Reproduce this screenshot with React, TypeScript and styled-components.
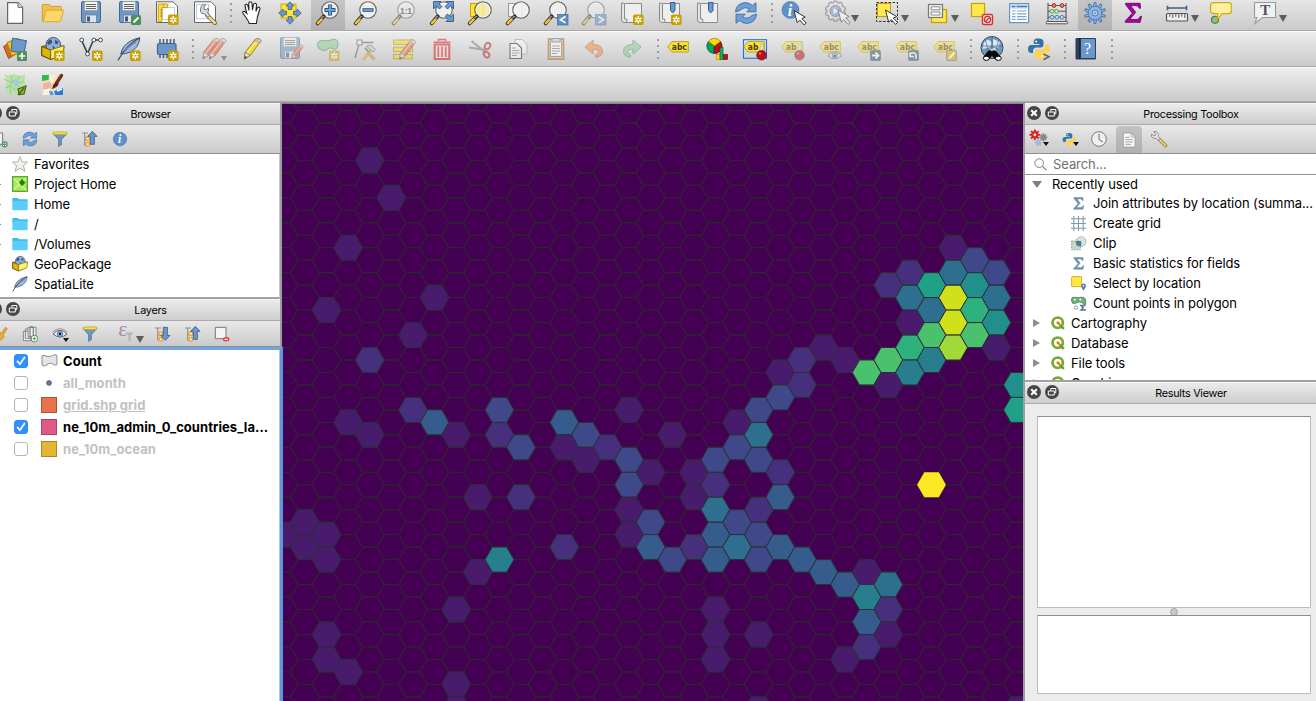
import React from 'react';
import styled, { createGlobalStyle, css } from 'styled-components';

const GlobalStyle = createGlobalStyle`
  * { box-sizing: border-box; }
  html, body { margin: 0; padding: 0; }
  body { width: 1316px; height: 701px; overflow: hidden; background: #ececec; }
  svg { display: block; flex: none; }
`;

/* ---------- layout ---------- */

const Window = styled.div`
  display: flex;
  flex-direction: column;
  width: 1316px;
  height: 701px;
  overflow: hidden;
  color: #000;
  font-family: Inter, 'Liberation Sans', sans-serif;
  font-size: 13px;
  letter-spacing: -0.08px;
`;

const ToolbarRow = styled.div<{ $height: number; $top: number; $last?: boolean }>`
  display: flex;
  flex: none;
  height: ${p => p.$height}px;
  border-bottom: 1px solid ${p => (p.$last ? '#9a9a9a' : '#fafafa')};
  box-shadow: inset 0 -1px 0 #a9a9a9;
  background: linear-gradient(${p => (p.$top === 1 ? '#e6e6e6' : '#ededed')}, #c9c9c9);
  --icon-top: ${p => p.$top}px;
`;

const Tool = styled.div<{ $wide?: boolean; $active?: boolean; $dim?: boolean }>`
  display: flex;
  position: relative;
  flex: none;
  align-items: flex-start;
  justify-content: center;
  width: ${p => (p.$wide ? 50 : 38)}px;
  padding-top: var(--icon-top);
  &:first-child { margin-left: -4px; }
  ${p => p.$active && css`
    width: 34px;
    margin: 0 2px 1px;
    background: linear-gradient(#c6c6c6, #b2b2b2);
  `}
  ${p => p.$dim && css` & > svg { opacity: 0.5; } `}
`;

const Caret = styled.i<{ $x: number; $y: number; $dark?: boolean; $small?: boolean }>`
  position: absolute;
  left: ${p => p.$x}px;
  top: ${p => p.$y}px;
  border: ${p => (p.$dark ? 3 : p.$small ? 3.5 : 4)}px solid transparent;
  border-top: ${p => (p.$dark ? 4.5 : p.$small ? 5 : 7.5)}px solid ${p => (p.$dark ? '#111' : p.$small ? '#8c8c8c' : '#5c5c5c')};
  border-bottom: 0;
`;

const Grip = styled.div`
  flex: none;
  width: 9px;
  padding: calc(var(--icon-top) + 2px) 0 0 6px;
  &::before {
    content: '';
    display: block;
    width: 2px;
    height: 20px;
    background: repeating-linear-gradient(#9a9a9a 0 2px, transparent 2px 6px);
  }
`;

const Workspace = styled.main`
  display: grid;
  grid-template-columns: 282px 741px 293px;
  flex: 1;
  min-height: 0;
`;

const LeftDock = styled.aside`
  display: flex;
  flex-direction: column;
  border-right: 2px solid #9d9d9d;
  min-height: 0;
`;

const RightDock = styled.aside`
  display: flex;
  flex-direction: column;
  border-left: 2px solid #9d9d9d;
  min-height: 0;
  min-width: 0;
`;

const MapCanvas = styled.section`
  border-top: 1px solid #858585;
  background: #440154;
  overflow: hidden;
`;

const TitleBar = styled.header<{ $left: number }>`
  display: flex;
  position: relative;
  flex: none;
  justify-content: center;
  align-items: center;
  height: 22px;
  padding-left: ${p => p.$left}px;
  padding-top: 1px;
  border-top: 1px solid #f5f5f5;
  border-bottom: 1px solid #aaa;
  background: linear-gradient(#ebebeb, #cdcdcd);
  font-size: 10.8px;
  letter-spacing: -0.27px;
  white-space: nowrap;
`;

const TitleButtons = styled.div<{ $x: number }>`
  display: flex;
  position: absolute;
  left: ${p => p.$x}px;
  top: 2px;
  gap: 4px;
`;

const DockTools = styled.div<{ $height: number; $offset?: number }>`
  display: flex;
  flex: none;
  height: ${p => p.$height}px;
  overflow: hidden;
  border-bottom: 1px solid #8f8f8f;
  background: linear-gradient(#e9e9e9, #cacaca);
  & > :first-child { margin-left: ${p => p.$offset ?? 0}px; }
`;

const DockTool = styled.div<{ $w?: number; $active?: boolean }>`
  display: flex;
  position: relative;
  flex: none;
  align-items: center;
  justify-content: center;
  width: ${p => p.$w ?? 30}px;
  ${p => p.$active && css`
    width: 26px;
    margin: 1px 2px 0;
    border-radius: 4px 4px 0 0;
    background: linear-gradient(#c2c2c2, #b0b0b0);
  `}
`;

const BrowserTree = styled.div`
  flex: none;
  height: 145px;
  overflow: hidden;
  background: #fff;
  border-bottom: 2px solid #a2a2a2;
  border-right: 1px solid #c9c9c9;
`;

const BrowserRow = styled.div<{ $branch?: boolean }>`
  display: flex;
  align-items: center;
  height: 20px;
  padding-left: 11px;
  gap: 6px;
  white-space: nowrap;
  &::before {
    content: '';
    width: 1px;
    height: 1px;
    margin-left: -11px;
    margin-right: 5px;
    background: ${p => (p.$branch ? '#8a8a8a' : 'transparent')};
  }
`;

const LayerTree = styled.div`
  position: relative;
  z-index: 1;
  flex: 1;
  margin-right: -3px;
  background: #fff;
  border-top: 3px solid #71a5e0;
  border-right: 3px solid #5f95dc;
  box-shadow: inset -1px 0 0 #a9c7ea;
`;

const LayerRow = styled.div<{ $muted?: boolean; $underline?: boolean }>`
  display: flex;
  align-items: center;
  height: 22px;
  padding-left: 14px;
  font-weight: 700;
  letter-spacing: 0.06px;
  color: ${p => (p.$muted ? '#c1c1c1' : '#000')};
  white-space: nowrap;
  & > span { text-decoration: ${p => (p.$underline ? 'underline' : 'none')}; }
`;

const CheckBox = styled.div<{ $on?: boolean }>`
  display: flex;
  align-items: center;
  justify-content: center;
  width: 14px;
  height: 14px;
  margin-right: 13px;
  border: 1px solid ${p => (p.$on ? '#2a8cf9' : '#b5b5b5')};
  border-radius: 3px;
  background: ${p => (p.$on ? '#2f92fc' : '#fff')};
`;

const Swatch = styled.div<{ $fill: string; $edge: string }>`
  width: 16px;
  height: 16px;
  background: ${p => p.$fill};
  border: 1px solid ${p => p.$edge};
`;

const LayerSymbol = styled.div`
  display: flex;
  align-items: center;
  justify-content: center;
  width: 16px;
  height: 16px;
  margin-right: 6px;
`;

const SearchField = styled.div`
  display: flex;
  flex: none;
  align-items: center;
  height: 21px;
  padding-left: 9px;
  gap: 6px;
  background: #fff;
  border-bottom: 1px solid #8f8f8f;
  color: #6f6f6f;
`;

const Toolbox = styled.div`
  flex: none;
  height: 207px;
  overflow: hidden;
  background: #fff;
  border-bottom: 2px solid #a2a2a2;
`;

const ToolboxRow = styled.div<{ $depth: number }>`
  display: flex;
  align-items: center;
  height: 20px;
  padding-left: ${p => (p.$depth === 1 ? 46 : 7)}px;
  gap: ${p => (p.$depth === 1 ? 7 : 0)}px;
  white-space: nowrap;
  &:first-child { height: 18px; }
`;

const Twisty = styled.i<{ $open?: boolean }>`
  width: 0;
  height: 0;
  margin-right: ${p => (p.$open ? 10 : 11)}px;
  border-style: solid;
  ${p => p.$open
    ? css`border-width: 7px 5px 0; border-color: #808080 transparent;`
    : css`border-width: 4px 0 4px 7px; border-color: transparent #8e8e8e; margin-left: 1px;`}
`;

const ProviderIcon = styled.span`
  display: flex;
  width: 14px;
  margin-right: 6px;
`;

const Results = styled.div`
  display: flex;
  flex-direction: column;
  flex: 1;
  padding: 12px 5px 7px 12px;
  background: #ececec;
`;

const ResultBox = styled.div<{ $height: number }>`
  flex: none;
  height: ${p => p.$height}px;
  background: #fff;
  border: 1px solid #bcbcbc;
  border-top-color: #8e8e8e;
`;

const SplitHandle = styled.div`
  display: flex;
  flex: none;
  align-items: center;
  justify-content: center;
  height: 7px;
  &::before {
    content: '';
    width: 6px;
    height: 6px;
    border-radius: 50%;
    background: #c9c9c9;
    border: 1px solid #a8a8a8;
  }
`;

/* ---------- icons ---------- */

type P = { size?: number };
const Svg = ({ size = 24, children }: { size?: number; children: React.ReactNode }) => (
  <svg width={size} height={size} viewBox="0 0 24 24" fill="none" overflow="visible">{children}</svg>
);

const Star = () => (
  <g>
    <rect x="13" y="13.5" width="10.6" height="10.4" rx="1.6" fill="#c8a100" />
    <path d="M18.3 15v7.4M15.1 16.8l6.4 3.8M21.5 16.8l-6.4 3.8" stroke="#fff" strokeWidth="1.5" />
    <circle cx="18.3" cy="18.7" r="1" fill="#c8a100" />
  </g>
);
const GreenPlus = () => (
  <g>
    <rect x="14" y="14" width="10" height="10" rx="1.6" fill="#4f8f5b" />
    <path d="M19 15.8v6.4M15.8 19h6.4" stroke="#fff" strokeWidth="1.7" />
  </g>
);
const Arrow = ({ x = 13, y = 8 }: { x?: number; y?: number }) => (
  <path transform={`translate(${x} ${y})`} d="M0 0l3.2 12.2 2.6-2.6 4.3 4.8 2-1.8-4.3-4.6 3.4-1.4z" fill="#fff" stroke="#333" strokeWidth="1" />
);
const Lens = ({ cx = 14, cy = 9, fill = '#f1f1f1' }: { cx?: number; cy?: number; fill?: string }) => (
  <g>
    <circle cx={cx} cy={cy} r="8.2" fill={fill} fillOpacity="0.85" stroke="#6b6b6b" strokeWidth="1.3" />
    <circle cx={cx} cy={cy} r="7" stroke="#fff" strokeOpacity=".7" strokeWidth="1" />
    <path d={`M${cx - 6.3} ${cy + 6.3}L1.6 22.4`} stroke="#3b3b3b" strokeWidth="3.8" strokeLinecap="round" />
    <path d="M5.6 18.4L1.9 22.1" stroke="#ffc52b" strokeWidth="2.3" strokeLinecap="round" />
    <path d={`M${cx - 6.4} ${cy + 6}l-2 2`} stroke="#ddd" strokeWidth="1" />
  </g>
);
const FloppyBase = () => (
  <g>
    <path d="M2.5 2.2Q2.5.5 4 .5h16.2q1.3 0 1.3 1.7v17.6q0 1.7-1.5 1.7H4q-1.5 0-1.5-1.7z" fill="#6d97c4" stroke="#41658f" />
    <path d="M5.5.5h13v9h-13z" fill="#f2f2f0" stroke="#8a9198" strokeWidth=".6" />
    <path d="M7 3.5h10M7 5.5h10M7 7.5h10" stroke="#555" strokeWidth=".9" />
    <path d="M6.5 14h11v7.5h-11z" fill="#dfe3e6" stroke="#4f6d8c" strokeWidth=".6" />
    <path d="M8 15.500h3v5H8z" fill="#3c5a7d" />
  </g>
);
const PencilShape = ({ color = '#f1d836', edge = '#9a8512' }: { color?: string; edge?: string }) => (
  <g>
    <path d="M5 15.5L15.5 2q2.8-2.2 5.6 1.6L10.5 18.2 4.4 22z" fill={color} stroke={edge} strokeWidth=".9" />
    <path d="M7 16.5L17.5 3" stroke="#fff" strokeOpacity=".55" strokeWidth="1.4" />
    <path d="M15.3 2.3q3-2.2 5.8 1.4l-1.6 2.2q-2.2-3-5.6-1.8z" fill="#d8d0c4" stroke="#88827a" strokeWidth=".7" />
    <path d="M5.2 15.3l5.1 2.8L4.4 22z" fill="#eee4cc" stroke="#666" strokeWidth=".7" />
    <path d="M4.9 18.9l2.4 1.2L4.4 22z" fill="#444" />
  </g>
);
const Label = ({ text = 'abc' }: { text?: string }) => (
  <g>
    <path d="M.8 9.8L5 4.6h16.3V15H5z" fill="#f8e13e" stroke="#c2a20e" />
    <text x="4.8" y="12.7" fontFamily="DejaVu Sans" fontWeight="700" fontSize="8.3" fill="#4a3c14" textLength={text === 'abc' ? 15 : 10.5} lengthAdjust="spacingAndGlyphs">{text}</text>
  </g>
);

const NewIcon = () => <Svg><path d="M4.6 1.6H15l4.6 4.700v16.100h-15z" fill="#fff" stroke="#666" strokeWidth="1.2" /><path d="M15 1.600v4.700h4.600" fill="#ddd" stroke="#666" /></Svg>;
const OpenIcon = () => <Svg><path d="M1.200 4.200q0-.8 1-.8h6l1.800 2h9.400q1 0 1 1v4H5.800L2.400 20.500q-1 0-1-1z" fill="#f0c24a" stroke="#cf9e2b" /><path d="M5.200 9.200h17.300L19.600 20q-.2.700-1 .700H2z" fill="#fcd667" stroke="#d9a935" /></Svg>;
const SaveIcon = () => <Svg><FloppyBase /></Svg>;
const SaveAsIcon = () => <Svg><FloppyBase /><rect x="14" y="14" width="10" height="10" rx="1.600" fill="#4f8f5b" /><path d="M16.500 21.500l5-5" stroke="#fff" strokeWidth="2" /></Svg>;
const LayoutNewIcon = () => <Svg><path d="M1.500.8H18l4.500 4.500V21.500h-21z" fill="#fff" stroke="#666" /><path d="M7.500 6.500h12v12h-12z" fill="#fff" stroke="#b9cde4" /><path d="M3.200 3h9.500v3.600H6.800v14H3.200z" fill="#f9dc4b" stroke="#c7a10d" /><path d="M5 9h2M5 12h2M5 15h2M8.500 3v2" stroke="#a88706" strokeWidth=".8" /><Star /></Svg>;
const LayoutManagerIcon = () => <Svg><path d="M1.500.8H18l4.500 4.500V21.500h-21z" fill="#fff" stroke="#666" /><path d="M3.600 3.300h12v14.500h-12z" stroke="#b3cbe8" fill="#fbfdff" /><path d="M14 14l8 8" stroke="#7b6a38" strokeWidth="4" strokeLinecap="round" /><path d="M15.500 15.500l6.300 6.300" stroke="#eee0a0" strokeWidth="2.400" strokeLinecap="round" /><path d="M8.200 5.200q1-1.600 3-1.500l1.500.5-2 2 .3 2.100 2.400.4 1.800-1.700q1 3.300-.8 4.600l2.400 3-2 2-3.200-3.800Q7 12.500 7.500 9z" fill="#dcdcdc" stroke="#666" strokeWidth=".9" /></Svg>;
const HandIcon = () => <Svg><path d="M9.300 22.500q-1-3-3.700-6.500L2.800 12q-.5-2 1.700-1.600l2.300 2.100L5 5q-.1-1.900 1.500-1.700 1.200.2 1.500 1.700l1 4.500-.2-6.800q.1-2 1.700-1.900 1.500.1 1.600 1.900l.3 6.500 1-5.600q.5-1.600 1.900-1.300 1.400.4 1.200 2l-.6 6 1.400-3.200q.7-1.400 1.900-.8 1 .5.6 2.200-1.700 5.200-2.400 7.500l-1 6.500z" fill="#fff" stroke="#222" strokeWidth="1.100" /></Svg>;
const PanIcon = () => <Svg><rect x="3" y="3" width="15" height="14" fill="#ffe23b" stroke="#d5a800" /><g fill="#6b99cc" stroke="#355f91" strokeWidth=".8"><path d="M12 .8l4 4.200h-2.200v3.500h-3.600V5H8z" /><path d="M12 23.200l4-4.200h-2.200v-3.500h-3.600V19H8z" /><path d="M.8 12L5 8v2.200h3.500v3.600H5V16z" /><path d="M23.200 12L19 8v2.200h-3.500v3.600H19V16z" /></g></Svg>;
const ZoomInIcon = () => <Svg><Lens /><path d="M14 3.500v11M8.500 9h11" stroke="#31547e" strokeWidth="3.800" /><path d="M14 4.300v9.400M9.300 9h9.400" stroke="#6c9fd8" strokeWidth="2.100" /></Svg>;
const ZoomOutIcon = () => <Svg><Lens /><path d="M8.500 9h11" stroke="#31547e" strokeWidth="3.600" /><path d="M9.300 9h9.400" stroke="#6c9fd8" strokeWidth="1.900" /></Svg>;
const ZoomNativeIcon = () => <Svg><Lens /><text x="8" y="12.600" fontFamily="Liberation Sans" fontWeight="700" fontSize="9.500" fill="#333" textLength="12" lengthAdjust="spacingAndGlyphs">1:1</text></Svg>;
const ZoomFullIcon = () => <Svg><Lens /><g fill="#6b99cc" stroke="#2f5788" strokeWidth=".9"><path d="M3.500.5h7.500L8.900 2.600l3 3-2.400 2.400-3-3L3.500 7.800z" /><path d="M23.500.5H16l2.100 2.100-3 3 2.400 2.400 3-3 3 2.800z" /><path d="M23.500 20.500H16l2.100-2.100-3-3 2.400-2.400 3 3 3-2.800z" /></g></Svg>;
const ZoomSelectionIcon = () => <Svg><rect x="2.500" y="2.500" width="13" height="13" fill="#ffe529" stroke="#c8a100" /><Lens cx={15} fill="#f6edb0" /></Svg>;
const ZoomLayerIcon = () => <Svg><rect x="2.500" y="2.500" width="13" height="13" fill="#f3f3f3" stroke="#999" /><Lens cx={15} /></Svg>;
const ZoomLastIcon = () => <Svg><Lens /><rect x="13.500" y="13.500" width="10.500" height="10.500" fill="#5e8fc6" stroke="#3d689b" strokeWidth=".7" /><path d="M21.500 15.500l-5 3.200 5 3.200" stroke="#fff" strokeWidth="1.700" /></Svg>;
const ZoomNextIcon = () => <Svg><Lens /><rect x="13.500" y="13.500" width="10.500" height="10.500" fill="#5e8fc6" stroke="#3d689b" strokeWidth=".7" /><path d="M16.500 15.500l5 3.200-5 3.200" stroke="#fff" strokeWidth="1.700" /></Svg>;
const MapSheet = () => <g><path d="M4.500 2.500h17v19h-17z" fill="#eee" stroke="#8b8b8b" /><path d="M1.500 2q2.500-.8 3 1.500v14.500h2.300v3.500H4q-2.500-.3-2.500-2.500z" fill="#e4e4e4" stroke="#8b8b8b" /></g>;
const NewMapIcon = () => <Svg><MapSheet /><Star /></Svg>;
const NewBookmarkIcon = () => <Svg><MapSheet /><path d="M12.500 1.500h4.500v8l-2.300 2.500-2.200-2.500z" fill="#6b99cc" stroke="#355f91" /><Star /></Svg>;
const BookmarksIcon = () => <Svg><MapSheet /><path d="M12.500 1.500h4.500v8l-2.300 2.500-2.200-2.500z" fill="#6b99cc" stroke="#355f91" /></Svg>;
const RefreshIcon = ({ size }: P) => <Svg size={size}><g fill="#6d9fd8" stroke="#3e6da6" strokeWidth=".9"><path d="M1.500 11Q2 2.500 11 1.600q4.500 0 7.300 2.800L22 1.800v9H12.800l2.800-3Q10 5.300 6.300 9.300z" /><path d="M22.500 13Q22 21.500 13 22.400q-4.500 0-7.300-2.800L2 22.200v-9h9.200l-2.800 3q5.600 2.500 9.300-1.500z" /></g></Svg>;
const IdentifyIcon = () => <Svg><circle cx="9.500" cy="9" r="8.500" fill="#5f90c7" stroke="#42709f" strokeWidth=".6" /><text x="6.800" y="14.500" fontFamily="Liberation Serif" fontStyle="italic" fontWeight="700" fontSize="16" fill="#fff">i</text><Arrow x={13} y={9.500} /></Svg>;
const GearPath = ({ fill, stroke, n = 10 }: { fill: string; stroke: string; n?: number }) => (
  <g>
    {Array.from({ length: n }, (_, i) => <rect key={i} x="10.300" y=".8" width="3.400" height="6" rx="1" fill={fill} stroke={stroke} strokeWidth=".9" transform={`rotate(${(i * 360) / n} 12 12)`} />)}
    <circle cx="12" cy="12" r="7.300" fill={fill} stroke={stroke} strokeWidth="0.9" />
  </g>
);
const ActionIcon = () => <Svg><g transform="translate(-1.500 -2)">{Array.from({ length: 10 }, (_, i) => <circle key={i} cx="12" cy="3.800" r="2" fill="#e4e4e4" stroke="#666" strokeWidth="1.300" transform={`rotate(${i * 36} 12 12)`} />)}<circle cx="12" cy="12" r="8" fill="#e4e4e4" /><circle cx="12" cy="12" r="5.600" fill="#6f9bcb" stroke="#446" strokeWidth=".8" /><path d="M10 9l5 3-5 3z" fill="#fff" /></g><Arrow x={13} y={9} /></Svg>;
const SelectIcon = () => <Svg><rect x="1.500" y="1.500" width="21" height="19" stroke="#333" strokeDasharray="2.500 1.500" /><rect x="2.500" y="2.500" width="13" height="13" fill="#ffe94d" stroke="#c8a100" /><Arrow x={10.500} y={9} /></Svg>;
const SelectFormIcon = () => <Svg><rect x="6.500" y="8.500" width="15" height="13" fill="#ffe94d" stroke="#c8a100" strokeWidth="1.300" /><rect x="3.500" y="3.500" width="14" height="13" fill="#f4f4f4" stroke="#777" strokeWidth="1.200" /><path d="M6 5.800h9v3H6zM6 11h9v3H6z" stroke="#888" fill="#fff" /></Svg>;
const DeselectIcon = () => <Svg><rect x="2.500" y="2.500" width="13" height="13" fill="#ffe94d" stroke="#c8a100" strokeWidth="1.200" /><rect x="13.500" y="13.500" width="10" height="10" rx="1.500" fill="#fbe4e4" stroke="#d9302f" strokeWidth="1.400" /><circle cx="18.500" cy="18.500" r="3.100" stroke="#d9302f" strokeWidth="1.300" /><path d="M16.500 20.500l4-4" stroke="#d9302f" strokeWidth="1.300" /></Svg>;
const TableIcon = () => <Svg><rect x="2.600" y="2.600" width="19" height="19" fill="#fff" stroke="#6892c2" strokeWidth="1.200" /><rect x="3.500" y="3.500" width="17.200" height="4" fill="#a9cbee" /><path d="M5 5.500h3M10 5.500h10" stroke="#4c7aad" /><path d="M5 10h3.500M10 10h9.500M5 12.800h3.500M10 12.800h9.500M5 15.600h3.500M10 15.600h9.500M5 18.400h3.500M10 18.400h9.500" stroke="#79a4d6" strokeWidth="1.200" /></Svg>;
const AbacusIcon = () => <Svg><path d="M3 2v20M21 2v20M3 4.500h18M3 10.300h18M3 16.300h18" stroke="#555" strokeWidth="1.100" /><rect x="1.200" y="20.500" width="21.600" height="2.300" rx="1" fill="#eee" stroke="#555" />{[9, 17].map(x => <circle key={x} cx={x} cy="4.500" r="1.900" fill="#f08080" stroke="#b22" />)}{[7, 11.5].map(x => <circle key={x} cx={x} cy="10.300" r="1.900" fill="#c5efb8" stroke="#59a149" />)}{[7, 12, 17].map(x => <circle key={x} cx={x} cy="16.300" r="1.900" fill="#bcd9f5" stroke="#4b7fb3" />)}</Svg>;
const GearIcon = () => <Svg>{Array.from({ length: 10 }, (_, i) => <path key={i} d="M10.500 6l.6-4.500h1.800l.6 4.500z" fill="#8fb4e4" stroke="#4a7ab3" transform={`rotate(${i * 36} 12 12)`} />)}<circle cx="12" cy="12" r="6.700" fill="#8fb4e4" stroke="#4a7ab3" strokeWidth=".8" /><circle cx="12" cy="12" r="3" fill="#b9cde6" stroke="#4a7ab3" /><circle cx="12" cy="12" r="1" fill="#6d90b8" /></Svg>;
const SigmaIcon = ({ size, color = '#b000b0', edge = '#5c005c' }: P & { color?: string; edge?: string }) => <Svg size={size}><path d="M4.500 2.300h14.600l.4 5h-1.200Q17.500 4.600 15 4.600H9.500l5.200 6.700-6 7.200h7q2.500 0 3.700-3.200h1.100l-1.300 6H4.300v-1.200l7-7.800-6.800-8.800z" fill={color} stroke={edge} strokeWidth=".8" /></Svg>;
const MeasureIcon = () => <Svg><path d="M2.500 7h19M2.500 4.700v4.600M21.500 4.700v4.600" stroke="#3d6288" strokeWidth="1.600" /><rect x="1.500" y="12.500" width="21" height="7.500" rx="1" fill="#efefef" stroke="#555" strokeWidth="1.200" /><path d="M4.800 13v2.800M7.800 13v4M10.800 13v2.800M13.800 13v4M16.800 13v2.800M19.800 13v4" stroke="#555" /></Svg>;
const TipIcon = () => <Svg><circle cx="6" cy="18.800" r="3.500" fill="#8fbc83" stroke="#4e8251" strokeWidth="1.200" /><path d="M4.500 1.600h15q3 0 3 3v5q0 3-3 3h-6.200L8 18.500l1-5.900H4.500q-3 0-3-3v-5q0-3 3-3z" fill="#fbf0a0" stroke="#d1aa10" strokeWidth="1.200" /></Svg>;
const TextNoteIcon = () => <Svg><path d="M1.500 1.500h21v15H9.500L2 22.500l1.800-6H1.500z" fill="#edf3f6" stroke="#999" strokeWidth="1.100" /><text x="7.200" y="14.300" fontFamily="Liberation Serif" fontWeight="700" fontSize="15" fill="#555">T</text></Svg>;

const DataSourceIcon = () => <Svg><path d="M.6 9.500l8-5.500 5 12.500-8 5z" fill="#d9692b" stroke="#a5461a" /><path d="M4 5.500L15 1.500l5 13L8.500 19z" fill="#f5be1a" stroke="#a88000" /><path d="M9.500 1.200l14 2.500-2.500 12.500L8 14z" fill="#6d97c8" stroke="#3f678f" /><GreenPlus /></Svg>;
const GeoPackageIcon = ({ size, badge = true }: P & { badge?: boolean }) => <Svg size={size}><path d="M.8 9.500l10.500-2 11.800 2-2 8L10 22.500.8 18.500z" fill="#c79e00" stroke="#5c4a00" /><circle cx="12.300" cy="7.800" r="7.300" fill="#8fb0d8" stroke="#3b587e" /><path d="M7.500 3.500q3-2 3.500.5t-2.500 3.500-2-2zM14 3l3.500 1.500-1 3-2.500-1zM11.500 8.500l2.500 2-2 2z" fill="#3a5579" /><path d="M.8 9.500L9.700 13v9.400L.8 18.300z" fill="#e0b400" stroke="#4e4000" strokeWidth=".8" /><path d="M9.700 13L23 8.500l-.6 9L9.700 22.400z" fill="#fbf36a" stroke="#6d5d00" strokeWidth=".8" />{badge && <Star />}</Svg>;
const ShapefileIcon = () => <Svg><path d="M2.500 3l6 13.500L14.500 3h6.500" stroke="#3b474f" strokeWidth="1.700" /><g fill="#fff" stroke="#3b474f"><circle cx="2.700" cy="3" r="1.900" /><circle cx="8.500" cy="17" r="1.900" /><circle cx="14.800" cy="3" r="1.900" /><circle cx="21.500" cy="3" r="1.900" /></g><Star /></Svg>;
const FeatherIcon = ({ size, badge = true }: P & { badge?: boolean }) => <Svg size={size}><path d="M22.800.8Q12 3 7 9.500 4.500 13 3.800 17 14 17 20 9.500q2.500-4 2.800-8.700z" fill="#9db9db" stroke="#3c5472" /><path d="M22.500 1Q10 7 1 23.200" stroke="#33485f" strokeWidth="1.300" /><path d="M19 5q-8 4-11.500 10" stroke="#6789b2" strokeWidth="1.400" />{badge && <Star />}</Svg>;
const MemoryIcon = () => <Svg><path d="M5 2v4M8.500 2v4M12 2v4M15.500 2v4M19 2v4M5 17v4M8.500 17v4M12 17v4" stroke="#4f5b66" strokeWidth="1.500" /><rect x="2.500" y="6.500" width="18.500" height="11" rx="1.500" fill="#6b97c8" stroke="#3c6691" strokeWidth="1.200" /><Star /></Svg>;
const EditsIcon = () => <Svg><g transform="translate(-3.500 0)"><PencilShape color="#ea4b25" edge="#8c3018" /></g><g transform="translate(3 0)"><PencilShape color="#ea4b25" edge="#8c3018" /></g></Svg>;
const PencilIcon = () => <Svg><PencilShape /></Svg>;
const SaveEditsIcon = () => <Svg><FloppyBase /><g transform="translate(11 7) scale(.68)"><PencilShape color="#ee5427" edge="#a54a30" /></g></Svg>;
const AddPolygonIcon = () => <Svg><path d="M1.500 7Q1 2 6.500 2q6 1 10-1 6-1 5.500 5-.5 6-4.500 4.500-3.500-2.500-6 0-2.500 3-6 1Q2 10.500 1.500 7z" transform="translate(0 1.500)" fill="#86cc8f" stroke="#3f8a4c" /><Star /></Svg>;
const VertexIcon = () => <Svg><path d="M5.500 5.500L1 21M5.500 5.500h14" stroke="#555" strokeWidth="1.300" /><rect x="3" y="3" width="5" height="5" fill="#eee" stroke="#555" /><path d="M9 23l9-11" stroke="#d8ac26" strokeWidth="2.800" /><path d="M12.500 9.500q4-3 7 1l2 2-2.500 2.500-3-3z" fill="#ccc" stroke="#666" /><path d="M13 15l7.500 7.500" stroke="#c39c2a" strokeWidth="3.200" /><path d="M11 11l4 4" stroke="#666" strokeWidth="2" /></Svg>;
const AttributesIcon = () => <Svg><g fill="#ffe100" stroke="#a88a00"><rect x="1.500" y="3" width="19" height="4.300" /><rect x="1.500" y="10.200" width="19" height="4.300" /><rect x="1.500" y="17.400" width="19" height="4.300" /></g><g transform="translate(3.500 1.500) scale(.96)"><PencilShape color="#ea5b2b" edge="#80401c" /></g></Svg>;
const TrashIcon = () => <Svg><path d="M4.700 7.500h14.600V22H4.700z" fill="#ffdada" stroke="#d60f12" strokeWidth="2" /><path d="M8.300 9.500v10.500M12 9.500v10.500M15.700 9.500v10.500" stroke="#d60f12" strokeWidth="1.600" /><path d="M3.500 5.200h17M8.500 4V2.500h7V4" stroke="#d60f12" strokeWidth="1.600" /></Svg>;
const CutIcon = () => <Svg><path d="M1 10.500L18 13M3.500 4L18 16" stroke="#777" strokeWidth="1.900" /><ellipse cx="19.500" cy="9" rx="3.300" ry="2.500" transform="rotate(-55 19.500 9)" stroke="#b41a23" strokeWidth="1.900" /><ellipse cx="18.500" cy="17.500" rx="3.300" ry="2.400" transform="rotate(50 18.500 17.500)" stroke="#b41a23" strokeWidth="1.900" /></Svg>;
const CopyIcon = () => <Svg><path d="M9 2.500h7l5 4.500v10H9z" fill="#fafafa" stroke="#999" /><path d="M4 6.500h7l4.500 4.500v10.500H4z" fill="#fff" stroke="#222" strokeWidth="1.200" /><path d="M6 11h4M6 13.500h7.500M6 16h7.500M6 18.500h5" stroke="#777" /></Svg>;
const PasteIcon = () => <Svg><rect x="4.500" y="2" width="15" height="20" fill="#f0c88c" stroke="#a35d1b" strokeWidth="1.600" /><path d="M6.500 4.500h11v15h-11z" fill="#fff" stroke="#555" strokeWidth=".8" /><path d="M8 1.500h8v3.500H8z" fill="#ccc" stroke="#666" /><path d="M8 9h8M8 11.500h8M8 14h8M8 16.500h5" stroke="#666" strokeWidth=".9" /></Svg>;
const UndoIcon = () => <Svg><path d="M3 10l8-7v4.500q9.500 0 9.500 7 0 4.500-6.500 6l-1-2q4-1.200 3.500-4-.6-2.500-5.500-2.300V17z" fill="#f4874d" stroke="#c25f2c" /></Svg>;
const RedoIcon = () => <Svg><path d="M21 10l-8-7v4.500q-9.500 0-9.500 7 0 4.500 6.500 6l1-2q-4-1.200-3.500-4 .6-2.500 5.500-2.300V17z" fill="#89cf96" stroke="#4a9a58" /></Svg>;

const LabelIcon = () => <Svg><Label /></Svg>;
const DiagramIcon = () => <Svg><path d="M9.500 9L3.300 4.500A7.500 7.500 0 0 0 8.500 16.500z" fill="#00a75b" stroke="#13532f" strokeWidth=".7" /><path d="M9.500 9l6-4.500a7.500 7.500 0 0 1-6.500 12z" fill="#b80f0f" stroke="#4d0a0a" strokeWidth=".7" /><path d="M9.500 9l6-4.500A7.500 7.500 0 0 0 3.300 4.500z" fill="#ffd800" stroke="#5e4f00" strokeWidth=".5" /><rect x="11.500" y="17.500" width="3.500" height="5" fill="#ffe000" stroke="#a80" strokeWidth=".6" /><rect x="15" y="10.500" width="3" height="12" fill="#15b069" stroke="#07532e" strokeWidth=".6" /><rect x="18.500" y="17.500" width="4" height="5" fill="#c01515" stroke="#4d0a0a" strokeWidth=".6" /></Svg>;
const PinLabel = () => <g><Label text="ab" /><path d="M16.500 14L18.200 7h2l-.6 7z" fill="#eee" stroke="#999" strokeWidth=".6" /><circle cx="18.500" cy="18.200" r="4.800" fill="#b5141b" stroke="#7b1014" strokeWidth=".7" /><circle cx="17" cy="16.500" r="1.100" fill="#e98b8b" /></g>;
const PinActiveIcon = () => <Svg><rect x=".5" y="2.700" width="23" height="18.600" stroke="#1b74e8" strokeWidth="1.100" /><PinLabel /></Svg>;
const PinIcon = () => <Svg><PinLabel /></Svg>;
const EyeShape = () => <g><path d="M1.500 12Q12 1 22.500 12 12 21 1.500 12z" fill="#f5f5f5" stroke="#666" strokeWidth="1.500" /><circle cx="12" cy="12" r="4.300" fill="#7ba9da" stroke="#46709f" /><circle cx="12" cy="12" r="1.700" fill="#111" /><path d="M1 9Q12-1 22.500 9" stroke="#888" strokeWidth="1.300" /></g>;
const LabelShowIcon = () => <Svg><Label /><g transform="translate(8 11.500) scale(.65 .62)"><EyeShape /></g></Svg>;
const Chip = ({ fill, children }: { fill: string; children: React.ReactNode }) => <Svg><Label /><rect x="13.500" y="13.500" width="10" height="10" rx="1" fill={fill} stroke="#27465e" strokeWidth=".6" />{children}</Svg>;
const LabelMoveIcon = () => <Chip fill="#33566f"><path d="M15 18.500h5.500M18.500 15.500l3 3-3 3" stroke="#fff" strokeWidth="1.900" /></Chip>;
const LabelRotateIcon = () => <Chip fill="#33566f"><path d="M20.500 22q2-5-1.500-6t-4 3M15 15.500v4h4" stroke="#fff" strokeWidth="1.500" /></Chip>;
const LabelEditIcon = () => <Chip fill="#e3a900"><path d="M16 21.500l5.500-6" stroke="#fff" strokeWidth="2" /></Chip>;
const MetaSearchIcon = () => <Svg><circle cx="12" cy="10.500" r="11" fill="#7798bd" stroke="#33506f" /><path d="M4 5q5-4 7 0t-4 6-4-1zM13 2l7 3-2 6-5-2zM10 12l5-1 3 5h-7z" fill="#dde8f2" /><path d="M2 9h20M12 0v20M5 3q4 8 1 15M19 3q-4 8-1 15" stroke="#3b5878" strokeWidth=".6" /><path d="M4 19l4-5 2-1 2 1.500L14 13l2 1 4 5q2 3-1 3.500t-5-1l-2-3-2 3q-2 2-5 1t-1-3.500z" fill="#0a0a0a" /><g fill="#fff" stroke="#000"><ellipse cx="6.300" cy="21.300" rx="3" ry="2.100" /><ellipse cx="18.300" cy="21.300" rx="3" ry="2.100" /></g></Svg>;
const PythonShape = () => <g><path d="M11.500 1.500c-4.500 0-4.800 2-4.800 3.500V7h5.600v1H4.500C2 8 1 10 1 12.200S2.200 16 4.300 16H6v-2.200c0-2 1.500-3.300 3.300-3.300h4.600c1.500 0 2.600-1.200 2.600-2.700V4.700c0-2-2-3.200-5-3.200z" fill="#3673a5" /><path d="M13 22c4.500 0 4.800-2 4.800-3.500v-2h-5.600v-1H20c2.500 0 2.500-2 2.500-4.200S21.200 7.500 20 7.500h-1.800v2.300c0 2-1.500 3-3.300 3h-4.600c-1.500 0-2.600 1.400-2.600 2.900v3.100c0 2 2 3.200 5.300 3.200z" fill="#ffd343" /><circle cx="9.200" cy="4.500" r="1" fill="#fff" /><circle cx="15" cy="19" r="1" fill="#fff" /></g>;
const PythonIcon = () => <Svg><PythonShape /><path d="M16.500 17l5.500 2.700-5.500 3" stroke="#666" strokeWidth="1.600" /></Svg>;
const HelpIcon = () => <Svg><rect x="1.500" y="1" width="20.500" height="21.500" rx="1" fill="#2b4158" /><rect x="7" y="2" width="14" height="19" fill="#6b97c9" /><path d="M5.800 1v21" stroke="#111e2b" /><text x="10" y="17" fontFamily="Liberation Serif" fontSize="16" fill="#fff">?</text></Svg>;

const OsmIcon = () => <Svg><path d="M1.500 1.500l5 1 5-1.500 5 2 5.500-1.500-.5 6 1 5-1.500 5-6 3-6-1-6 2 1-5.500-1.500-5.500 1-4.500z" fill="#b9e2a5" /><path d="M1 6l6 3 4-2 5 3 5-2M2 15l5-2 6 4M8 2l1 6-2 6 1 7M16 3l-2 7 3 6" stroke="#98cc8d" strokeWidth="1" /><path d="M12 6l4 2-1 4-3 2-3-4z" fill="#a5c9e3" /><path d="M15 16l8-3-2 8-5 .5z" fill="#93b944" stroke="#3c6512" strokeWidth="1.200" /><path d="M15 22l6-7" stroke="#3c6512" strokeWidth="1.300" /></Svg>;
const StyleMapIcon = () => <Svg><path d="M1 2h21v20H1z" fill="#f1e2b4" /><path d="M1 2h7l-.5 5L1 8z" fill="#2bbd51" /><path d="M2 10l7-1 2 4-3 4-6-1z" fill="#eeb1a8" /><path d="M9 2h6l-2 6-4-1z" fill="#f4ecd6" /><path d="M17 8l5-2v10l-6 2-2-4z" fill="#cddff0" /><path d="M11 22q1-4 5-5l6-2v7z" fill="#2c79d9" /><path d="M1 22q5-6 9-5t4 5z" fill="#f8f3df" /><path d="M8 18q4-1 5 4H9z" fill="#5a9be6" /><path d="M3 18l6-2M9 3l2 6M16 18l5-2" stroke="#fff" strokeWidth="1.500" /><path d="M20.500 2.500L15.500 10" stroke="#783216" strokeWidth="3.400" strokeLinecap="round" /><path d="M12 12q3-4 5.500-1.500.5 2.500-5 5l-2 .5q1.500-1.500 1.500-4z" fill="#5a2412" /></Svg>;

/* dock icons */
const AddLayerIcon = () => <Svg size={16}><path d="M1 3h15v17H1" fill="#f3f3f3" stroke="#777" strokeWidth="1.500" /><circle cx="19" cy="20" r="3.800" fill="#fff" stroke="#4f8f5b" strokeWidth="1.800" /><path d="M19 17.500v5M16.500 20h5" stroke="#4f8f5b" strokeWidth="1.500" /></Svg>;
const FilterIcon = () => <Svg size={16}><path d="M2 4l8 9v10l4-2.500V13l8-9z" fill="#6e98c7" stroke="#486c95" strokeWidth="1.200" /><path d="M2 1.500h20v3.800H2z" fill="#f9e43e" stroke="#b99b1e" /></Svg>;
const TreeArrowIcon = ({ down }: { down?: boolean }) => <Svg size={16}><path d="M0 3h9M4 3v18M4 12h4M4 21h4" stroke="#8d8d8d" strokeWidth="1.500" /><rect x="6" y="9" width="5" height="5" fill="#fbe8c4" stroke="#ec9b1c" strokeWidth="1.600" /><rect x="6" y="17.500" width="5" height="5" fill="#fbe8c4" stroke="#ec9b1c" strokeWidth="1.600" /><path transform={down ? 'rotate(180 15.500 11)' : undefined} d="M15.500.5l7 7.500h-4v12h-6V8h-4z" fill="#6d97c8" stroke="#355f91" strokeWidth="1.300" /></Svg>;
const InfoIcon = () => <Svg size={14}><circle cx="12" cy="12" r="11.500" fill="#5f90c7" stroke="#42709f" /><text x="8.500" y="18.500" fontFamily="Liberation Serif" fontStyle="italic" fontWeight="700" fontSize="20" fill="#fff">i</text></Svg>;
const BroomIcon = () => <Svg size={16}><path d="M1 17q8 1 10-9l3 3 6-9 3 2-6 9 1 3Q14 24 6 22z" fill="#e8ab3b" stroke="#b8801e" /></Svg>;
const AddGroupIcon = () => <Svg size={16}><path d="M2 8h12v14H2zM5 4.500h12v14H5z" fill="#eee" stroke="#777" strokeWidth="1.300" /><path d="M9 2h12v14H9z" fill="#eee" stroke="#777" strokeWidth="1.300" /><path d="M12 20V4q0-3 2.500-3T17 4v14" stroke="#667c92" strokeWidth="1.700" /><rect x="14" y="14.500" width="9" height="9" rx="3" fill="#fff" stroke="#4f8f5b" strokeWidth="1.500" /><path d="M18.500 16.500v5M16 19h5" stroke="#4f8f5b" strokeWidth="1.600" /></Svg>;
const EyeIcon = () => <Svg size={16}><EyeShape /></Svg>;
const EpsilonIcon = () => <Svg size={20}><text x="1.500" y="14" fontFamily="Liberation Serif" fontSize="26" fill="#a488a8">ε</text><path d="M10 10h10l-3.500 4v6.500h-3V14z" fill="#b5b5b5" stroke="#ccc" strokeWidth=".6" /></Svg>;
const RemoveIcon = () => <Svg size={16}><path d="M2 2h16v17H2z" fill="#f4f4f4" stroke="#777" strokeWidth="1.500" /><rect x="13.500" y="17" width="9.500" height="6" rx="2.500" fill="#e23c3c" /><path d="M15.500 20h5.500" stroke="#fff" strokeWidth="1.600" /></Svg>;
const StarIcon = () => <Svg size={16}><path d="M12 .8l3.200 8 8.300.4-6.400 5.300 2.300 8.600-7.400-4.700-7.300 4.700 2.200-8.600L.5 9.200l8.300-.4z" fill="#f1f1ec" stroke="#b3b3a8" strokeWidth="1.500" /></Svg>;
const ProjectHomeIcon = () => <Svg size={16}><rect x="1" y="1" width="22" height="22" fill="#b2e65f" stroke="#53ad2f" strokeWidth="2" /><path d="M2 4l9 7M22 22L8 9M3 20l9-9 9-8" stroke="#fff7d4" strokeWidth="1.300" /><path d="M15 5l4.500 5L15 14.500 11 10z" fill="#0c8900" stroke="#0c8900" /></Svg>;
const FolderIcon = () => <Svg size={16}><path d="M.5 4q0-1 1-1h7l2 2h12q1 0 1 1v3H.5z" fill="#3db9ea" /><path d="M.5 7h23v13q0 1.500-1.500 1.500H2Q.5 21.500.5 20z" fill="#5ccdfb" /></Svg>;
const DbIcon = () => <Svg size={16}><path d="M3 2h18v6H3z" fill="#537da8" /></Svg>;
const PolygonLayerIcon = () => <Svg size={17}><path d="M1.500 5Q2 2.800 5 3.500q7 3 13-.5 4.500-1.500 4.500 2.500v9.500q-.5 3-4 1.500-6-4-10 0-5 4-7-.5z" fill="#e5e5e5" stroke="#929292" strokeWidth="1.500" /></Svg>;
const PointLayerIcon = () => <Svg size={16}><circle cx="12" cy="12" r="3.600" fill="#8264a8" stroke="#555" strokeWidth="1.200" /></Svg>;
const CheckMark = () => <svg width="10" height="10" viewBox="0 0 10 10" fill="none"><path d="M1.500 5.400l2.400 2.800 4.600-6.700" stroke="#fff" strokeWidth="1.700" strokeLinecap="round" /></svg>;

const CloseButton = () => <svg width="14" height="14" viewBox="0 0 14 14"><circle cx="7" cy="7" r="7" fill="#464646" /><path d="M4.200 4.200l5.600 5.600M9.800 4.200L4.200 9.800" stroke="#fff" strokeWidth="2.100" /></svg>;
const FloatButton = () => <svg width="14" height="14" viewBox="0 0 14 14" fill="none"><circle cx="7" cy="7" r="7" fill="#464646" /><path d="M5.800 5.500V3.500h5v4.200h-1.500M3.300 6h6v4h-6z" stroke="#fff" strokeWidth="1" /></svg>;

const GearsIcon = () => <Svg size={18}><g transform="translate(-1 -1) scale(.62)"><GearPath fill="#d42424" stroke="#d42424" n={8} /><circle cx="12" cy="12" r="3" fill="#fff" /></g><g transform="translate(12 4) scale(.48)"><GearPath fill="#888" stroke="#888" n={8} /></g><g transform="translate(6 12) scale(.42)"><GearPath fill="#9db9df" stroke="#9db9df" n={8} /></g></Svg>;
const PythonSmallIcon = () => <Svg size={15}><PythonShape /></Svg>;
const ClockIcon = () => <Svg size={16}><circle cx="12" cy="12" r="11" fill="#efefef" stroke="#7d7d7d" strokeWidth="1.500" /><path d="M12 4v8.500l5.500 4" stroke="#7d7d7d" strokeWidth="1.700" /></Svg>;
const DocIcon = () => <Svg size={16}><path d="M3.500 1.500H15l6 6v15H3.500z" fill="#f7f7f7" stroke="#999" strokeWidth="1.200" /><path d="M15 1.500v6h6" stroke="#999" /><path d="M6.500 8h6M6.500 11.500h11M6.500 15h11M6.500 18.500h9" stroke="#999" strokeWidth="1.300" /></Svg>;
const WrenchIcon = () => <Svg size={16}><path d="M12.500 12.500l9.500 9.500" stroke="#8b7425" strokeWidth="5" strokeLinecap="round" /><path d="M12.500 12.500l9.500 9.500" stroke="#ead470" strokeWidth="3" strokeLinecap="round" /><path d="M4 .8q4-.8 6 1.700t.5 5.500l3 3.500-2.500 2.500-3.500-3Q3 12 .8 8.500.2 6 1 4.500L4 7.500l2.500-.7.5-2.600z" fill="#e9e9e9" stroke="#777" strokeWidth="1.200" /></Svg>;
const SearchIcon = () => <Svg size={13}><circle cx="9.500" cy="9.500" r="8" stroke="#777" strokeWidth="1.700" /><path d="M15.500 15.500l7.500 7" stroke="#777" strokeWidth="2" /></Svg>;
const GridIcon = () => <Svg size={15}><path d="M4.500 0v24M12 0v24M19.500 0v24M0 4.500h24M0 12h24M0 19.500h24" stroke="#7d97ad" strokeWidth="1.700" /></Svg>;
const ClipIcon = () => <Svg size={15}><circle cx="16" cy="9" r="8" fill="#d6e5d6" stroke="#7e967e" strokeWidth="1.400" strokeDasharray="2.500 2" /><path d="M1 8h14v14H1z" fill="#c6d9c8" stroke="#7e967e" strokeWidth="1.400" strokeDasharray="2.500 2" /><path d="M8 8h7q3 2 1 8-5 2-8-3z" fill="#54799c" /></Svg>;
const SelectLocIcon = () => <Svg size={15}><rect x="1" y="1" width="16" height="16" rx="1" fill="#ffe84a" stroke="#cfae14" strokeWidth="1.500" /><path d="M20 12q4 0 4 3.700 0 2.300-4 7.800-4-5.500-4-7.800 0-3.700 4-3.700z" fill="#5c84ad" /><circle cx="20" cy="15.500" r="1.300" fill="#fff" /></Svg>;
const CountPointsIcon = () => <Svg size={15}><path d="M.5 6q0-5 6-4 5 1.500 9 0 8-1 8 5.500v6q-3 1-6-3-5-2-8 0-4 3-7 1z" fill="#6fae7b" stroke="#44794f" strokeWidth="1.200" /><circle cx="6" cy="6" r="1.500" fill="#fff" /><circle cx="15" cy="6" r="1.500" fill="#fff" /><circle cx="8" cy="18.500" r="2.600" fill="#fff" stroke="#888" strokeWidth="1.400" /><path d="M23 15h-7l3.500 3.700L16 22.500h8" stroke="#55778f" strokeWidth="2.400" /></Svg>;
const QgisIcon = () => <Svg size={14}><circle cx="11.500" cy="11.500" r="8.700" stroke="#7fa832" strokeWidth="5" /><path d="M13 13l9 9" stroke="#6d9a2b" strokeWidth="4.500" /><circle cx="11.500" cy="11.500" r="6.200" fill="#fff" /><path d="M13 13l4 4" stroke="#7fa832" strokeWidth="3.500" /><circle cx="12" cy="11.500" r="2.700" fill="#ee7913" /></Svg>;

/* ---------- hex map ---------- */

const VIRIDIS = ['#440154', '#481b6d', '#46307e', '#3f4889', '#365c8d', '#2e6e8e', '#277f8e', '#21908d', '#1fa187', '#2db27d', '#4ac16d', '#73d056', '#a0da39', '#d0e11c', '#fde725'];

/* column -> [half-row index, colour class] */
const CELLS: Record<number, [number, number][]> = {
  0: [[30, 1]],
  1: [[29, 1], [31, 1]],
  2: [[12, 1], [30, 1], [32, 1], [38, 1], [40, 1]],
  3: [[7, 1], [21, 1], [41, 1]],
  4: [[0, 1], [16, 2], [22, 1]],
  5: [[3, 1]],
  6: [[14, 1], [20, 2]],
  7: [[11, 1], [21, 4]],
  8: [[22, 1], [36, 1], [42, 1], [44, 1]],
  9: [[27, 1], [33, 1]],
  10: [[20, 3], [22, 2], [32, 6]],
  11: [[23, 3], [27, 2]],
  13: [[21, 4], [23, 1], [31, 2]],
  14: [[22, 3], [24, 1]],
  15: [[23, 2]],
  16: [[20, 1], [24, 3], [26, 3], [28, 1], [30, 1]],
  17: [[25, 1], [29, 3], [31, 4]],
  18: [[22, 1], [32, 3]],
  19: [[25, 1], [27, 1], [31, 2]],
  20: [[24, 3], [26, 2], [28, 5], [30, 4], [32, 4], [36, 1], [38, 1], [40, 1]],
  21: [[21, 1], [23, 3], [29, 3], [31, 5]],
  22: [[20, 3], [22, 5], [24, 3], [28, 2], [30, 3], [32, 3], [38, 1], [44, 1]],
  23: [[17, 1], [19, 3], [25, 2], [27, 4], [31, 4]],
  24: [[16, 2], [18, 2], [32, 4]],
  25: [[15, 1], [33, 4]],
  26: [[16, 1], [34, 4], [40, 1]],
  27: [[17, 10], [33, 1], [35, 6], [37, 4], [39, 2]],
  28: [[10, 2], [16, 10], [18, 1], [34, 5], [36, 2], [38, 1]],
  29: [[9, 2], [11, 5], [13, 1], [15, 9], [17, 6]],
  30: [[10, 8], [12, 5], [14, 10], [16, 6], [26, 14]],
  31: [[7, 1], [9, 5], [11, 13], [13, 13], [15, 12]],
  32: [[8, 3], [10, 7], [12, 9], [14, 10]],
  33: [[9, 3], [11, 5], [13, 7], [15, 1]],
  34: [[18, 7], [20, 8], [44, 1]],
};

const COL_STEP = 21.605;
const HALF_ROW = 12.475;
const R = 14.4;

const hexPath = (col: number, n: number) => {
  const x = 1.4 + col * COL_STEP;
  const y = 56.4 + n * HALF_ROW;
  const f = (v: number) => v.toFixed(1);
  return `M${f(x - R)} ${f(y)}L${f(x - R / 2)} ${f(y - HALF_ROW)}H${f(x + R / 2)}L${f(x + R)} ${f(y)}L${f(x + R / 2)} ${f(y + HALF_ROW)}H${f(x - R / 2)}Z`;
};

const HexMap = () => {
  let base = '';
  for (let c = 0; c <= 34; c++) {
    for (let n = -6 + (c % 2); n <= 46; n += 2) base += hexPath(c, n);
  }
  const filled = Object.entries(CELLS).flatMap(([c, list]) => list.map(([n, k]) => ({ c: Number(c), n, k })));
  return (
    <svg width="741" height="597" viewBox="0 0 741 597">
      <path d={base} fill="none" stroke="#2a2a2a" strokeWidth="0.85" />
      {filled.map(({ c, n, k }) => (
        <path key={`${c}-${n}`} d={hexPath(c, n)} fill={VIRIDIS[k]} stroke={k === 14 ? 'none' : '#2a3035'} strokeWidth="1" />
      ))}
    </svg>
  );
};

/* ---------- screen ---------- */

export default function App() {
  return (
    <Window>
      <GlobalStyle />
      <ToolbarRow $height={32} $top={1}>
        <Tool><NewIcon /></Tool>
        <Tool><OpenIcon /></Tool>
        <Tool><SaveIcon /></Tool>
        <Tool><SaveAsIcon /></Tool>
        <Tool><LayoutNewIcon /></Tool>
        <Tool><LayoutManagerIcon /></Tool>
        <Grip />
        <Tool><HandIcon /></Tool>
        <Tool><PanIcon /></Tool>
        <Tool $active><ZoomInIcon /></Tool>
        <Tool><ZoomOutIcon /></Tool>
        <Tool $dim><ZoomNativeIcon /></Tool>
        <Tool><ZoomFullIcon /></Tool>
        <Tool><ZoomSelectionIcon /></Tool>
        <Tool><ZoomLayerIcon /></Tool>
        <Tool><ZoomLastIcon /></Tool>
        <Tool $dim><ZoomNextIcon /></Tool>
        <Tool><NewMapIcon /></Tool>
        <Tool><NewBookmarkIcon /></Tool>
        <Tool><BookmarksIcon /></Tool>
        <Tool><RefreshIcon /></Tool>
        <Grip />
        <Tool><IdentifyIcon /></Tool>
        <Tool $wide $dim><ActionIcon /><Caret $x={39} $y={15} /></Tool>
        <Tool $wide><SelectIcon /><Caret $x={39} $y={15} /></Tool>
        <Tool $wide><SelectFormIcon /><Caret $x={39} $y={15} /></Tool>
        <Tool><DeselectIcon /></Tool>
        <Tool><TableIcon /></Tool>
        <Tool><AbacusIcon /></Tool>
        <Tool $active><GearIcon /></Tool>
        <Tool><SigmaIcon /></Tool>
        <Tool $wide><MeasureIcon /><Caret $x={39} $y={15} /></Tool>
        <Tool><TipIcon /></Tool>
        <Tool $wide><TextNoteIcon /><Caret $x={39} $y={15} /></Tool>
      </ToolbarRow>
      <ToolbarRow $height={36} $top={5}>
        <Tool><DataSourceIcon /></Tool>
        <Tool><GeoPackageIcon /></Tool>
        <Tool><ShapefileIcon /></Tool>
        <Tool><FeatherIcon /></Tool>
        <Tool><MemoryIcon /></Tool>
        <Grip />
        <Tool $dim><EditsIcon /><Caret $x={26} $y={24} $small /></Tool>
        <Tool><PencilIcon /></Tool>
        <Tool $dim><SaveEditsIcon /></Tool>
        <Tool $dim><AddPolygonIcon /></Tool>
        <Tool $dim><VertexIcon /></Tool>
        <Tool $dim><AttributesIcon /></Tool>
        <Tool $dim><TrashIcon /></Tool>
        <Tool $dim><CutIcon /></Tool>
        <Tool $dim><CopyIcon /></Tool>
        <Tool $dim><PasteIcon /></Tool>
        <Tool $dim><UndoIcon /></Tool>
        <Tool $dim><RedoIcon /></Tool>
        <Grip />
        <Tool><LabelIcon /></Tool>
        <Tool><DiagramIcon /></Tool>
        <Tool><PinActiveIcon /></Tool>
        <Tool $dim><PinIcon /></Tool>
        <Tool $dim><LabelShowIcon /></Tool>
        <Tool $dim><LabelMoveIcon /></Tool>
        <Tool $dim><LabelRotateIcon /></Tool>
        <Tool $dim><LabelEditIcon /></Tool>
        <Grip />
        <Tool><MetaSearchIcon /></Tool>
        <Grip />
        <Tool><PythonIcon /></Tool>
        <Grip />
        <Tool><HelpIcon /></Tool>
        <Grip />
      </ToolbarRow>
      <ToolbarRow $height={35} $top={5} $last>
        <Tool><OsmIcon /></Tool>
        <Tool><StyleMapIcon /></Tool>
      </ToolbarRow>

      <Workspace>
        <LeftDock>
          <TitleBar $left={21}>
            <TitleButtons $x={-12}><CloseButton /><FloatButton /></TitleButtons>
            Browser
          </TitleBar>
          <DockTools $height={29} $offset={-15}>
            <DockTool><AddLayerIcon /></DockTool>
            <DockTool><RefreshIcon size={16} /></DockTool>
            <DockTool><FilterIcon /></DockTool>
            <DockTool><TreeArrowIcon /></DockTool>
            <DockTool><InfoIcon /></DockTool>
          </DockTools>
          <BrowserTree>
            <BrowserRow><StarIcon />Favorites</BrowserRow>
            <BrowserRow $branch><ProjectHomeIcon />Project Home</BrowserRow>
            <BrowserRow $branch><FolderIcon />Home</BrowserRow>
            <BrowserRow $branch><FolderIcon />/</BrowserRow>
            <BrowserRow $branch><FolderIcon />/Volumes</BrowserRow>
            <BrowserRow><GeoPackageIcon size={16} badge={false} />GeoPackage</BrowserRow>
            <BrowserRow><FeatherIcon size={16} badge={false} />SpatiaLite</BrowserRow>
            <BrowserRow><DbIcon /></BrowserRow>
          </BrowserTree>
          <TitleBar $left={21}>
            <TitleButtons $x={-12}><CloseButton /><FloatButton /></TitleButtons>
            Layers
          </TitleBar>
          <DockTools $height={26} $offset={-15}>
            <DockTool><BroomIcon /></DockTool>
            <DockTool><AddGroupIcon /></DockTool>
            <DockTool><EyeIcon /><Caret $x={18} $y={17} $dark /></DockTool>
            <DockTool><FilterIcon /></DockTool>
            <DockTool $w={43}><EpsilonIcon /><Caret $x={31} $y={15} /></DockTool>
            <DockTool><TreeArrowIcon down /></DockTool>
            <DockTool><TreeArrowIcon /></DockTool>
            <DockTool $w={28}><RemoveIcon /></DockTool>
          </DockTools>
          <LayerTree>
            <LayerRow><CheckBox $on><CheckMark /></CheckBox><LayerSymbol><PolygonLayerIcon /></LayerSymbol><span>Count</span></LayerRow>
            <LayerRow $muted><CheckBox /><LayerSymbol><PointLayerIcon /></LayerSymbol><span>all_month</span></LayerRow>
            <LayerRow $muted $underline><CheckBox /><LayerSymbol><Swatch $fill="#e8734a" $edge="#a9553a" /></LayerSymbol><span>grid.shp grid</span></LayerRow>
            <LayerRow><CheckBox $on><CheckMark /></CheckBox><LayerSymbol><Swatch $fill="#e15989" $edge="#a4456a" /></LayerSymbol><span>ne_10m_admin_0_countries_la...</span></LayerRow>
            <LayerRow $muted><CheckBox /><LayerSymbol><Swatch $fill="#e5b636" $edge="#a88730" /></LayerSymbol><span>ne_10m_ocean</span></LayerRow>
          </LayerTree>
        </LeftDock>

        <MapCanvas><HexMap /></MapCanvas>

        <RightDock>
          <TitleBar $left={41}>
            <TitleButtons $x={2}><CloseButton /><FloatButton /></TitleButtons>
            Processing Toolbox
          </TitleBar>
          <DockTools $height={29} $offset={-1}>
            <DockTool><GearsIcon /><Caret $x={19} $y={17} $dark /></DockTool>
            <DockTool><PythonSmallIcon /><Caret $x={19} $y={17} $dark /></DockTool>
            <DockTool><ClockIcon /></DockTool>
            <DockTool $active><DocIcon /></DockTool>
            <DockTool><WrenchIcon /></DockTool>
          </DockTools>
          <SearchField><SearchIcon />Search...</SearchField>
          <Toolbox>
            <ToolboxRow $depth={0}><Twisty $open />Recently used</ToolboxRow>
            <ToolboxRow $depth={1}><SigmaIcon size={15} color="#6f8ea8" edge="#6f8ea8" />Join attributes by location (summa...</ToolboxRow>
            <ToolboxRow $depth={1}><GridIcon />Create grid</ToolboxRow>
            <ToolboxRow $depth={1}><ClipIcon />Clip</ToolboxRow>
            <ToolboxRow $depth={1}><SigmaIcon size={15} color="#6f8ea8" edge="#6f8ea8" />Basic statistics for fields</ToolboxRow>
            <ToolboxRow $depth={1}><SelectLocIcon />Select by location</ToolboxRow>
            <ToolboxRow $depth={1}><CountPointsIcon />Count points in polygon</ToolboxRow>
            <ToolboxRow $depth={0}><Twisty /><ProviderIcon><QgisIcon /></ProviderIcon>Cartography</ToolboxRow>
            <ToolboxRow $depth={0}><Twisty /><ProviderIcon><QgisIcon /></ProviderIcon>Database</ToolboxRow>
            <ToolboxRow $depth={0}><Twisty /><ProviderIcon><QgisIcon /></ProviderIcon>File tools</ToolboxRow>
            <ToolboxRow $depth={0}><Twisty /><ProviderIcon><QgisIcon /></ProviderIcon>Graphics</ToolboxRow>
          </Toolbox>
          <TitleBar $left={41}>
            <TitleButtons $x={2}><CloseButton /><FloatButton /></TitleButtons>
            Results Viewer
          </TitleBar>
          <Results>
            <ResultBox $height={192} />
            <SplitHandle />
            <ResultBox $height={79} />
          </Results>
        </RightDock>
      </Workspace>
    </Window>
  );
}
